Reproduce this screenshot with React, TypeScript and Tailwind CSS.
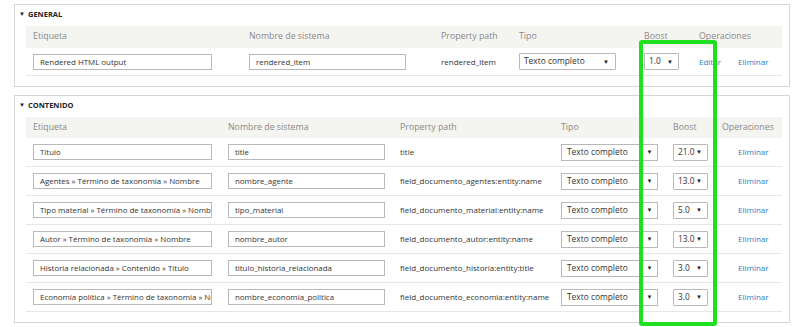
import React from "react";

type Row = {
  label: string;
  machine: string;
  path: string;
  boost: string;
};

const contentRows: Row[] = [
  { label: "Título", machine: "title", path: "title", boost: "21.0" },
  {
    label: "Agentes » Término de taxonomía » Nombre",
    machine: "nombre_agente",
    path: "field_documento_agentes:entity:name",
    boost: "13.0",
  },
  {
    label: "Tipo material » Término de taxonomía » Nombre",
    machine: "tipo_material",
    path: "field_documento_material:entity:name",
    boost: "5.0",
  },
  {
    label: "Autor » Término de taxonomía » Nombre",
    machine: "nombre_autor",
    path: "field_documento_autor:entity:name",
    boost: "13.0",
  },
  {
    label: "Historia relacionada » Contenido » Título",
    machine: "titulo_historia_relacionada",
    path: "field_documento_historia:entity:title",
    boost: "3.0",
  },
  {
    label: "Economía política » Término de taxonomía » Nombre",
    machine: "nombre_economia_politica",
    path: "field_documento_economia:entity:name",
    boost: "3.0",
  },
];

function Caret() {
  return <span className="text-[6px] leading-none text-[#222]">▼</span>;
}

function TextBox({ value, width }: { value: string; width: string }) {
  return (
    <div
      className={`${width} h-[16px] border border-[#b9b9b9] bg-white px-[6px] text-[7.9px] leading-[14px] text-[#333] whitespace-nowrap overflow-hidden`}
    >
      {value}
    </div>
  );
}

function Legend({ title }: { title: string }) {
  return (
    <div className="h-[21px] pl-[4px] pt-[3px] flex items-start gap-[3px] text-[7.5px] leading-[12px] font-bold text-[#222] uppercase">
      <span className="text-[6px] leading-[12px]">▼</span>
      <span>{title}</span>
    </div>
  );
}

const headCls = "text-[8.8px] text-[#8a8a8a] pl-[7px] whitespace-nowrap";
const linkCls = "text-[8px] leading-[12px] text-[#2f7cc7]";
const pathCls = "pl-[7px] text-[8px] text-[#333] whitespace-nowrap";

export default function App() {
  return (
    <div className="relative w-[800px] h-[327px] bg-white overflow-hidden font-['Open_Sans',sans-serif]">
      {/* GENERAL */}
      <section className="ml-[14px] mt-[4px] w-[776px] border border-[#d6d6d6] bg-white pb-[10px]">
        <Legend title="General" />
        <div className="ml-[11px] mr-[7px]">
          <div className="grid grid-cols-[216px_192px_78px_125px_55px_1fr] h-[22px] items-center bg-[#f4f4f1]">
            <div className={headCls}>Etiqueta</div>
            <div className={headCls}>Nombre de sistema</div>
            <div className={headCls}>Property path</div>
            <div className={headCls}>Tipo</div>
            <div className={headCls}>Boost</div>
            <div className={headCls}>Operaciones</div>
          </div>
          <div className="grid grid-cols-[216px_192px_78px_125px_55px_1fr] h-[28px] items-center border-b border-[#e6e6e3]">
            <div className="pl-[7px]">
              <TextBox value="Rendered HTML output" width="w-[179px]" />
            </div>
            <div className="pl-[7px]">
              <TextBox value="rendered_item" width="w-[157px]" />
            </div>
            <div className={pathCls}>rendered_item</div>
            <div className="pl-[7px]">
              <div className="w-[97px] h-[17px] border border-[#b9b9b9] rounded-[1px] flex items-center justify-between pl-[4px] pr-[6px] text-[8.4px] text-[#333]">
                <span>Texto completo</span>
                <Caret />
              </div>
            </div>
            <div className="pl-[7px]">
              <div className="w-[35px] h-[17px] border border-[#b9b9b9] rounded-[1px] flex items-center justify-between pl-[4px] pr-[5px] text-[8.4px] text-[#333]">
                <span>1.0</span>
                <Caret />
              </div>
            </div>
            <div className="pl-[7px] flex items-center gap-[17px] text-[8px] leading-[12px]">
              <span className={linkCls}>Editar</span>
              <span className={linkCls}>Eliminar</span>
            </div>
          </div>
        </div>
      </section>

      {/* CONTENIDO */}
      <section className="ml-[14px] mt-[8px] w-[776px] border border-[#d6d6d6] bg-white pb-[10px]">
        <Legend title="Contenido" />
        <div className="ml-[11px] mr-[7px]">
          <div className="grid grid-cols-[195px_172px_161px_112px_49px_1fr] h-[21px] items-center bg-[#f4f4f1]">
            <div className={headCls}>Etiqueta</div>
            <div className={headCls}>Nombre de sistema</div>
            <div className={headCls}>Property path</div>
            <div className={headCls}>Tipo</div>
            <div className={headCls}>Boost</div>
            <div className={headCls}>Operaciones</div>
          </div>
          {contentRows.map((r) => (
            <div
              key={r.machine}
              className="grid grid-cols-[195px_172px_161px_112px_49px_1fr] h-[29px] items-center border-b border-[#e6e6e3]"
            >
              <div className="pl-[7px]">
                <TextBox value={r.label} width="w-[179px]" />
              </div>
              <div className="pl-[7px]">
                <TextBox value={r.machine} width="w-[157px]" />
              </div>
              <div className={pathCls}>{r.path}</div>
              <div className="pl-[7px] flex">
                <div className="w-[81px] h-[17px] border border-[#b9b9b9] flex items-center pl-[5px] text-[8.4px] text-[#333] whitespace-nowrap">
                  Texto completo
                </div>
                <div className="w-[17px] h-[17px] -ml-px border border-[#b9b9b9] flex items-center justify-center">
                  <Caret />
                </div>
              </div>
              <div className="pl-[7px]">
                <div className="w-[35px] h-[17px] border border-[#b9b9b9] rounded-[1px] flex items-center justify-between pl-[4px] pr-[5px] text-[8.4px] text-[#333]">
                  <span>{r.boost}</span>
                  <Caret />
                </div>
              </div>
              <div className="pl-[23px] flex items-center text-[8px] leading-[12px]">
                <span className={linkCls}>Eliminar</span>
              </div>
            </div>
          ))}
        </div>
      </section>

      {/* highlight overlay */}
      <div className="absolute left-[639px] top-[40px] w-[78px] h-[286px] border-[4px] border-[#1fe01f] rounded-[3px]" />
    </div>
  );
}
